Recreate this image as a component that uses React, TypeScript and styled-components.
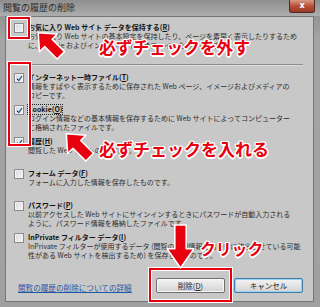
import React from 'react';
import styled, { createGlobalStyle } from 'styled-components';

const GlobalStyle = createGlobalStyle`
  html, body {
    margin: 0;
    padding: 0;
    background: #9c9c9c;
  }
  body {
    font-family: 'Noto Sans CJK JP', 'Noto Sans', sans-serif;
  }
`;

const Window = styled.div`
  position: relative;
  width: 320px;
  height: 307px;
  display: flex;
  flex-direction: column;
  background: linear-gradient(#8a8a8a, #a4a4a4 40px, #a0a0a0);
  overflow: hidden;
`;

const TitleBar = styled.div`
  height: 16px;
  display: flex;
  align-items: flex-start;
  justify-content: space-between;
  padding: 0 5px 0 3px;
  background: linear-gradient(#8f8f8f, #adadad);
`;

const Title = styled.span`
  margin-top: 3px;
  font-size: 9px;
  line-height: 9px;
  color: #2b2b2b;
`;

const CloseButton = styled.div`
  width: 24px;
  height: 12px;
  display: flex;
  align-items: center;
  justify-content: center;
  border: 1px solid #4d2a22;
  border-top: none;
  border-radius: 0 0 3px 3px;
  background: linear-gradient(#d59a86, #b8503a 50%, #9c3924);
  color: #fff;
  font-family: 'DejaVu Sans', sans-serif;
  font-size: 8px;
  font-weight: bold;
  line-height: 1;
`;

const Body = styled.div`
  flex: 1;
  margin: 0 6px 5px 5px;
  padding: 6px 10px 8px 8px;
  display: flex;
  flex-direction: column;
  background: #c8c8c8;
  border: 1px solid #767676;
`;

const Item = styled.div`
  height: 32px;
  display: flex;
  align-items: flex-start;
  gap: 4px;
`;

const Check = styled.span`
  width: 10px;
  height: 10px;
  flex: none;
  box-sizing: border-box;
  display: flex;
  align-items: center;
  justify-content: center;
  border: 1px solid #8b8b8b;
  background: linear-gradient(135deg, #d8d8d8, #f6f6f6);
  box-shadow: inset 0 0 0 1px #f2f2f2;
`;

const TextCol = styled.div`
  display: flex;
  flex-direction: column;
  white-space: nowrap;
`;

const ItemTitle = styled.span<{ $focus?: boolean }>`
  align-self: flex-start;
  font-size: 7px;
  line-height: 9px;
  font-weight: bold;
  color: #141414;
  outline: ${p => (p.$focus ? '1px dotted #222' : 'none')};
`;

const Desc = styled.span`
  font-size: 7px;
  line-height: 9px;
  color: #2e2e2e;
`;

const Separator = styled.div`
  height: 1px;
  margin: 9px 0 7px 2px;
  background: #8e8e8e;
  border-bottom: 1px solid #dcdcdc;
`;

const Footer = styled.div`
  margin-top: auto;
  display: flex;
  align-items: flex-end;
  justify-content: space-between;
`;

const HelpLink = styled.a`
  margin: 0 0 1px 4px;
  font-size: 7.6px;
  line-height: 9px;
  color: #1e57a4;
  text-decoration: underline;
`;

const Buttons = styled.div`
  display: flex;
  gap: 9px;
`;

const Button = styled.button<{ $focused?: boolean }>`
  width: 69px;
  height: 15px;
  padding: 0;
  font-family: 'Noto Sans CJK JP', sans-serif;
  font-size: 7.5px;
  line-height: 1;
  color: #222;
  border: 1px solid ${p => (p.$focused ? '#3d7cab' : '#707070')};
  border-radius: 2px;
  background: linear-gradient(#f3f3f3, #e4e4e4 50%, #d2d2d2);
  box-shadow: inset 0 0 0 1px ${p => (p.$focused ? '#9fd0ee' : '#f8f8f8')};
`;

const RedBox = styled.div<{ $x: number; $y: number; $w: number; $h: number }>`
  position: absolute;
  left: ${p => p.$x}px;
  top: ${p => p.$y}px;
  width: ${p => p.$w}px;
  height: ${p => p.$h}px;
  box-sizing: border-box;
  border: 2px solid #e8000e;
  box-shadow: 0 0 0 1px #fff, inset 0 0 0 1px #fff;
`;

const Callout = styled.span<{ $x: number; $y: number; $size: number }>`
  position: absolute;
  left: ${p => p.$x}px;
  top: ${p => p.$y}px;
  font-size: ${p => p.$size}px;
  line-height: 1;
  font-weight: bold;
  white-space: nowrap;
  color: #e8000e;
  text-shadow:
    1.5px 0 #fff, -1.5px 0 #fff, 0 1.5px #fff, 0 -1.5px #fff,
    1px 1px #fff, -1px -1px #fff, 1px -1px #fff, -1px 1px #fff;
`;

const ArrowSvg = styled.svg<{ $x: number; $y: number; $rot: number }>`
  position: absolute;
  left: ${p => p.$x}px;
  top: ${p => p.$y}px;
  overflow: visible;
  transform: rotate(${p => p.$rot}deg);
`;

type ArrowProps = { x: number; y: number; w: number; h: number; rot: number };

// thick red arrow drawn pointing up, then rotated
const Arrow = ({ x, y, w, h, rot }: ArrowProps) => {
  const head = h * 0.45;
  const half = w * 0.21;
  const c = w / 2;
  const pts = [
    [c, 0],
    [w, head],
    [c + half, head],
    [c + half, h],
    [c - half, h],
    [c - half, head],
    [0, head],
  ]
    .map(p => p.join(','))
    .join(' ');
  return (
    <ArrowSvg $x={x} $y={y} $rot={rot} width={w} height={h} viewBox={`0 0 ${w} ${h}`}>
      <polygon points={pts} fill="#e8000e" stroke="#fff" strokeWidth={1.5} strokeLinejoin="round" />
    </ArrowSvg>
  );
};

const CheckMark = () => (
  <svg width="7" height="7" viewBox="0 0 7 7">
    <path d="M1 3.8 L2.8 5.6 L6 1" fill="none" stroke="#27498c" strokeWidth="1.3" />
  </svg>
);

type Entry = {
  title: React.ReactNode;
  lines: string[];
  checked?: boolean;
  focus?: boolean;
};

const entries: Entry[] = [
  {
    title: <>インターネット一時ファイル(<u>T</u>)</>,
    lines: ['情報をすばやく表示するために保存された Web ページ、イメージおよびメディアの', 'コピーです。'],
    checked: true,
  },
  {
    title: <>Cookie(<u>O</u>)</>,
    lines: ['ログイン情報などの基本情報を保存するために Web サイトによってコンピューター', 'に格納されたファイルです。'],
    checked: true,
    focus: true,
  },
  {
    title: <>履歴(<u>H</u>)</>,
    lines: ['閲覧した Web サイトの一覧です。'],
    checked: true,
  },
  {
    title: <>フォーム データ(<u>F</u>)</>,
    lines: ['フォームに入力した情報を保存したものです。'],
  },
  {
    title: <>パスワード(<u>P</u>)</>,
    lines: ['以前アクセスした Web サイトにサインインするときにパスワードが自動入力される', 'ように、パスワード情報を格納したファイルです。'],
  },
  {
    title: <>InPrivate フィルター データ(<u>I</u>)</>,
    lines: ['InPrivate フィルターが使用するデータ (閲覧の詳細情報を自動的に流出させている可能', '性がある Web サイトを検出するため) を保存したものです。'],
  },
];

const Row = ({ title, lines, checked, focus }: Entry) => (
  <Item>
    <Check>{checked && <CheckMark />}</Check>
    <TextCol>
      <ItemTitle $focus={focus}>{title}</ItemTitle>
      {lines.map(l => (
        <Desc key={l}>{l}</Desc>
      ))}
    </TextCol>
  </Item>
);

export default function App() {
  return (
    <>
      <GlobalStyle />
      <Window>
        <TitleBar>
          <Title>閲覧の履歴の削除</Title>
          <CloseButton>x</CloseButton>
        </TitleBar>

        <Body>
          <Row
            title={<>お気に入り Web サイト データを保持する(<u>R</u>)</>}
            lines={[
              'お気に入り Web サイトの基本設定を保持したり、ページを素早く表示したりするため',
              'に、Cookie およびインターネット一時ファイルを保持します。',
            ]}
          />
          <Separator />
          {entries.map((e, i) => (
            <Row key={i} {...e} />
          ))}

          <Footer>
            <HelpLink>閲覧の履歴の削除についての詳細</HelpLink>
            <Buttons>
              <Button>
                削除(<u>D</u>)
              </Button>
              <Button $focused>キャンセル</Button>
            </Buttons>
          </Footer>
        </Body>

        {/* annotations drawn over the dialog */}
        <RedBox $x={8} $y={17} $w={22} $h={22} />
        <RedBox $x={8} $y={62} $w={23} $h={84} />
        <RedBox $x={149} $y={268} $w={83} $h={34} />

        <Arrow x={37} y={28} w={25} h={32} rot={-45} />
        <Arrow x={65} y={129} w={26} h={33} rot={-45} />
        <Arrow x={167} y={225} w={27} h={43} rot={180} />

        <Callout $x={99} $y={39} $size={16.8}>必ずチェックを外す</Callout>
        <Callout $x={99} $y={140} $size={17}>必ずチェックを入れる</Callout>
        <Callout $x={200} $y={241} $size={15.8}>クリック</Callout>
      </Window>
    </>
  );
}
